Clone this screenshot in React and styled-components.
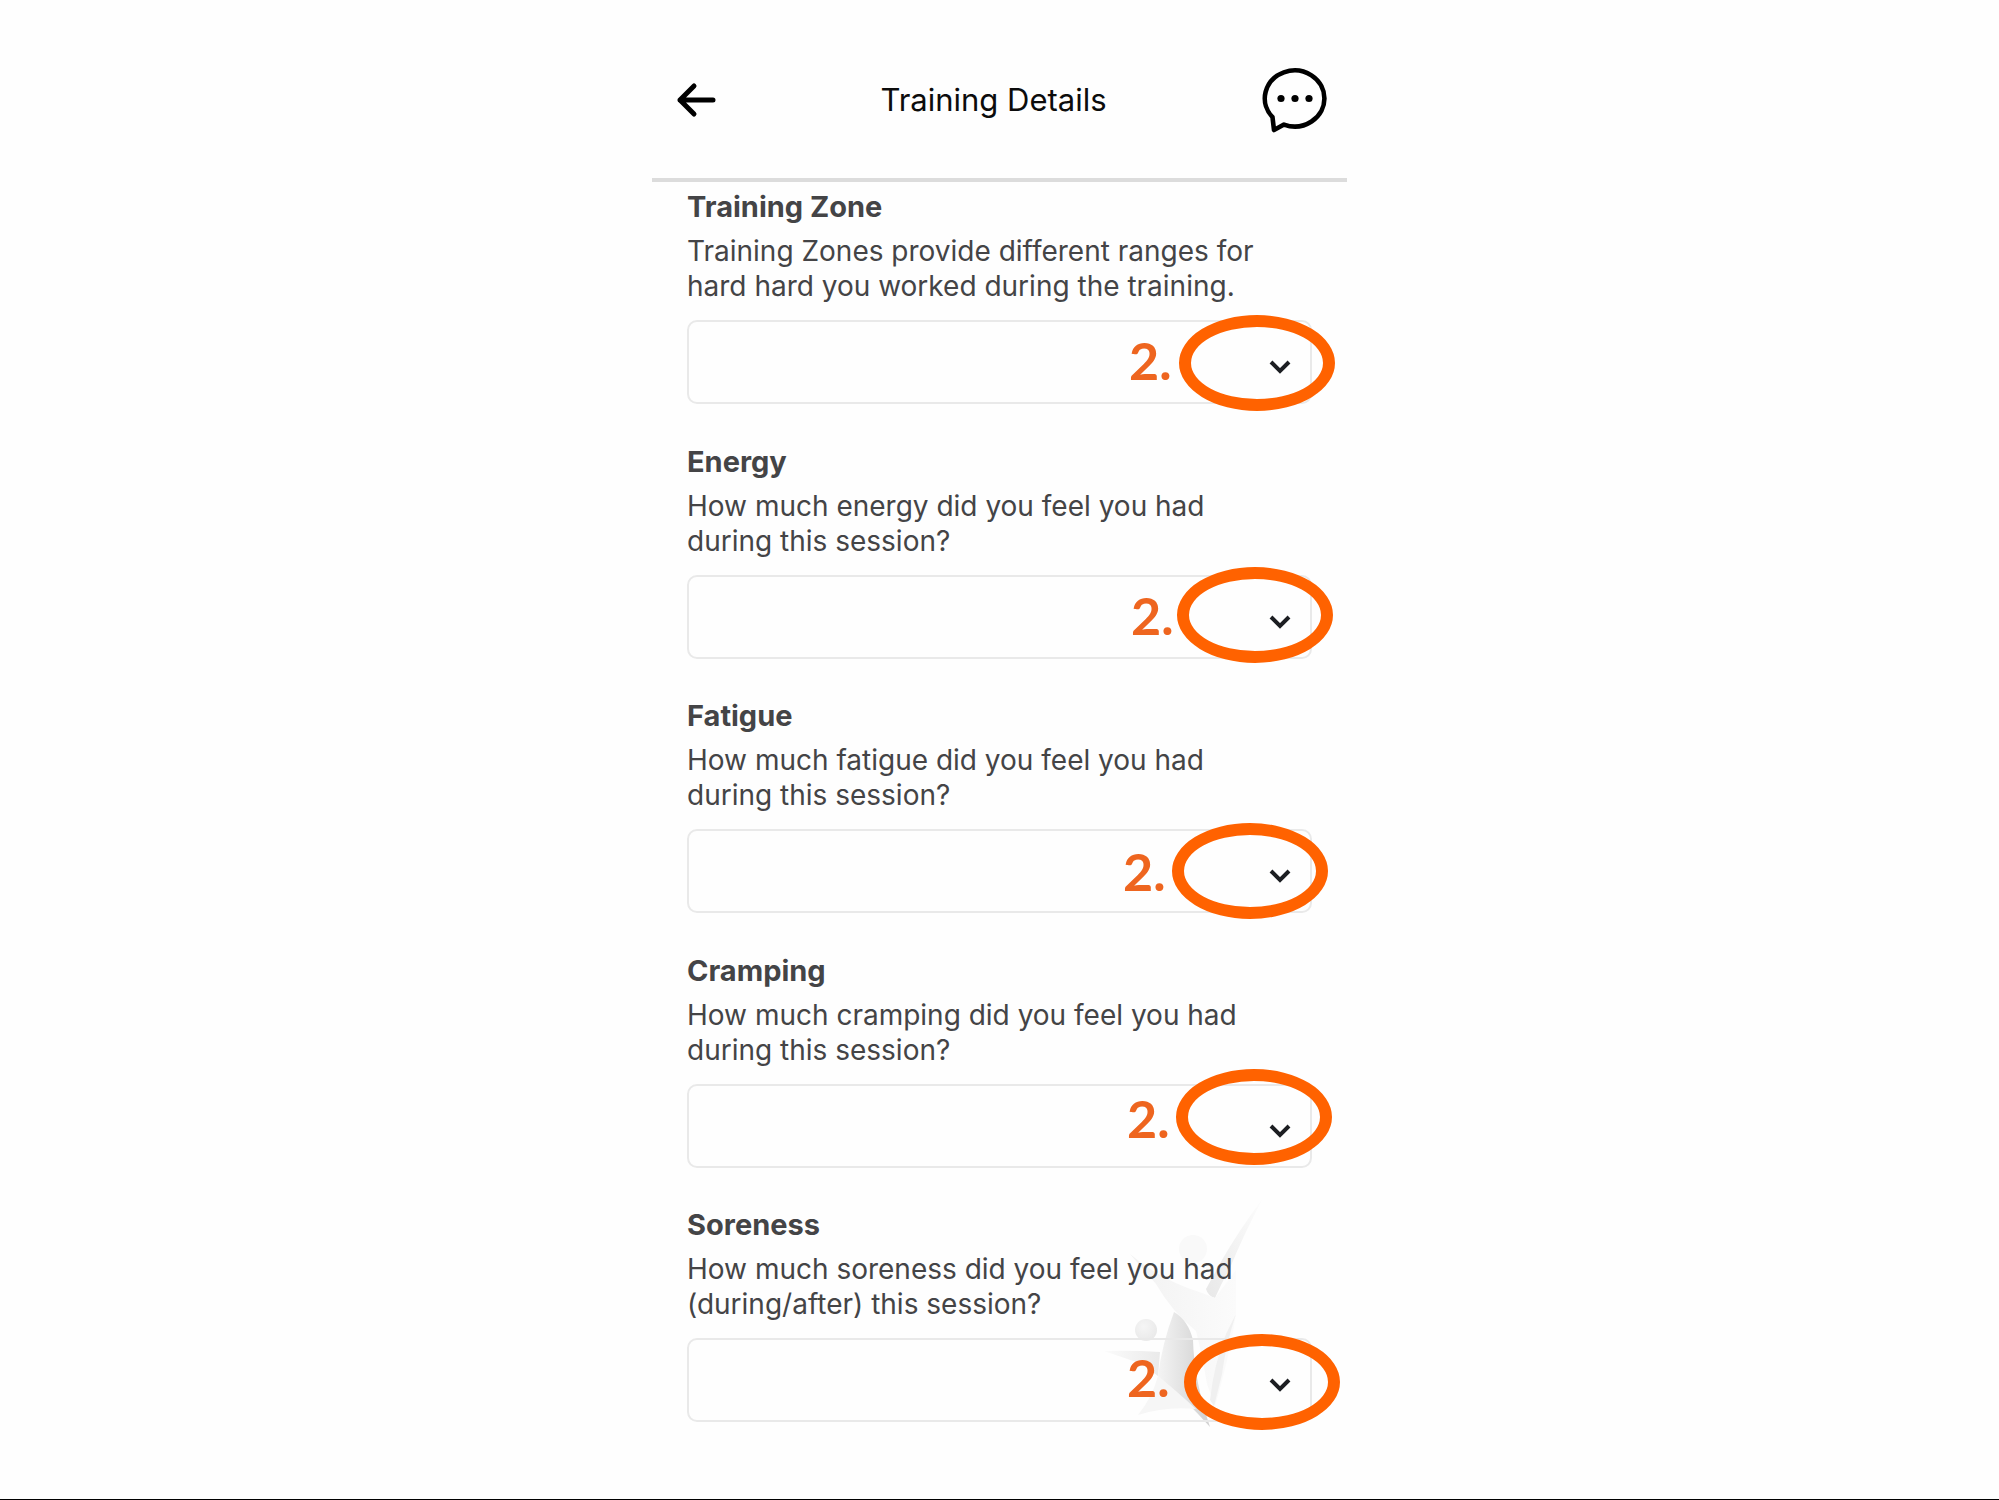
import React from "react";
import styled, { createGlobalStyle } from "styled-components";

const GlobalStyle = createGlobalStyle`
  *, *::before, *::after { box-sizing: border-box; }
  body {
    margin: 0;
    background: #fefefe;
    color: #444446;
    font-family: Inter, "Liberation Sans", sans-serif;
  }
`;

const Page = styled.div`
  display: flex;
  flex-direction: column;
  align-items: center;
  min-height: 100vh;
  border-bottom: 1px solid #000;
`;

const Screen = styled.main`
  display: flex;
  flex: 1;
  flex-direction: column;
  width: 100%;
  max-width: 695px;
`;

const Header = styled.header`
  display: grid;
  grid-template-columns: 52px 1fr 68px;
  align-items: center;
  padding: 66px 20px 44px 24px;
  border-bottom: 4px solid #dcdcdc;
`;

const IconButton = styled.button`
  display: flex;
  align-items: center;
  justify-content: ${(p) => p.$align};
  height: 68px;
  padding: 0;
  border: 0;
  background: none;
  color: #000;
  cursor: pointer;
`;

const Title = styled.h1`
  margin: 0;
  color: #0c0c0c;
  font-size: 31px;
  font-weight: 400;
  line-height: 40px;
  text-align: center;
`;

const Form = styled.form`
  display: flex;
  flex: 1;
  flex-direction: column;
  justify-content: space-between;
  padding: 7px 35px 77px;
`;

const Field = styled.div`
  position: relative;
  display: flex;
  flex-direction: column;
`;

const Label = styled.label`
  position: relative;
  margin-bottom: 9px;
  font-size: 29px;
  font-weight: 700;
  line-height: 36px;
`;

const Hint = styled.p`
  position: relative;
  margin: 0 0 16px;
  font-size: 28px;
  line-height: 35px;
  white-space: pre-line;
`;

const SelectBox = styled.div`
  position: relative;
  height: 84px;
`;

const Select = styled.select`
  width: 100%;
  height: 100%;
  padding: 0 56px 0 20px;
  appearance: none;
  border: 2px solid #e9e9e9;
  border-radius: 10px;
  background: transparent;
  color: inherit;
  font: inherit;
  font-size: 28px;
`;

const Chevron = styled.svg`
  position: absolute;
  top: 39px;
  right: 21px;
  pointer-events: none;
`;

const Step = styled.span`
  position: absolute;
  top: ${(p) => p.$y}px;
  left: ${(p) => p.$x}px;
  color: #ee651f;
  font-family: Lato, Inter, sans-serif;
  font-size: 52px;
  font-weight: 700;
  line-height: 64px;
  pointer-events: none;
`;

const Ring = styled.span`
  position: absolute;
  top: ${(p) => p.$y}px;
  left: ${(p) => p.$x}px;
  width: 156px;
  height: 96px;
  border: 12px solid #ff6200;
  border-radius: 50%;
  pointer-events: none;
`;

const Watermark = styled.svg`
  position: absolute;
  right: 40px;
  bottom: -12px;
`;

const fields = [
  {
    id: "zone",
    label: "Training Zone",
    hint: "Training Zones provide different ranges for\nhard hard you worked during the training.",
    step: [442, 8],
    ring: [492, -5],
  },
  {
    id: "energy",
    label: "Energy",
    hint: "How much energy did you feel you had\nduring this session?",
    step: [444, 8],
    ring: [490, -8],
  },
  {
    id: "fatigue",
    label: "Fatigue",
    hint: "How much fatigue did you feel you had\nduring this session?",
    step: [436, 10],
    ring: [485, -6],
  },
  {
    id: "cramping",
    label: "Cramping",
    hint: "How much cramping did you feel you had\nduring this session?",
    step: [440, 2],
    ring: [489, -15],
  },
  {
    id: "soreness",
    label: "Soreness",
    hint: "How much soreness did you feel you had\n(during/after) this session?",
    step: [440, 7],
    ring: [497, -4],
    watermark: true,
  },
];

function StarFigure() {
  return (
    <Watermark width="170" height="240" viewBox="0 0 170 240" aria-hidden="true">
      <defs>
        <linearGradient id="arm" x1="1" y1="0" x2="0" y2="1">
          <stop offset="0" stopColor="#fdfdfd" />
          <stop offset="1" stopColor="#e8e8e8" />
        </linearGradient>
        <linearGradient id="torso" x1="0" y1="0" x2="1" y2="0">
          <stop offset="0" stopColor="#f4f4f4" />
          <stop offset="0.700" stopColor="#dadada" />
          <stop offset="1" stopColor="#d0d0d0" />
        </linearGradient>
        <linearGradient id="body" x1="0" y1="0" x2="1" y2="0">
          <stop offset="0" stopColor="#f2f2f2" />
          <stop offset="1" stopColor="#fbfbfb" />
        </linearGradient>
        <linearGradient id="hand" x1="0" y1="0" x2="1" y2="0">
          <stop offset="0" stopColor="#fbfbfb" />
          <stop offset="1" stopColor="#eaeaea" />
        </linearGradient>
        <radialGradient id="head" cx="0.400" cy="0.350" r="0.700">
          <stop offset="0" stopColor="#f5f5f5" />
          <stop offset="1" stopColor="#e9e9e9" />
        </radialGradient>
      </defs>
      <circle cx="91" cy="55" r="14" fill="#f9f9f9" />
      <path d="M161 4Q136 38 120 66L104 95Q106 102 113 104Q120 88 128 74Q140 44 161 4Z" fill="url(#arm)" />
      <path d="M28 60Q58 86 100 99L113 104L134 76V120Q128 160 113 212L105 190Q100 160 94 137Q70 118 54 90Z" fill="url(#body)" />
      <path d="M134 120Q124 150 120 180L112 212L108 206Q112 170 124 140Z" fill="#f0f0f0" />
      <circle cx="44" cy="136" r="11" fill="url(#head)" />
      <path d="M72 118Q86 126 91 146Q92 186 108 233Q86 208 56 182Q60 150 72 118Z" fill="url(#torso)" />
      <path d="M2 157Q30 156 58 158L56 182L40 170Z" fill="url(#hand)" />
      <path d="M36 221Q50 204 56 182Q78 200 94 215Q64 212 36 221Z" fill="#f6f6f6" />
    </Watermark>
  );
}

export default function App() {
  return (
    <>
      <GlobalStyle />
      <Page>
        <Screen>
          <Header>
            <IconButton type="button" aria-label="Back" $align="flex-start">
              <svg width="42" height="36" viewBox="0 0 42 36" fill="none" stroke="currentColor" strokeWidth="5" strokeLinecap="round" strokeLinejoin="round">
                <path d="M37 18H4M18 4L4 18L18 32" />
              </svg>
            </IconButton>
            <Title>Training Details</Title>
            <IconButton type="button" aria-label="Messages" $align="flex-end">
              <svg width="68" height="68" viewBox="0 0 68 68" fill="none" stroke="currentColor" strokeWidth="4.600" strokeLinejoin="round">
                <path d="M13.500 51.200A29.800 28 0 1 1 25 58.600L15 64Z" />
                <g fill="currentColor" stroke="none">
                  <circle cx="22" cy="32.500" r="3.600" />
                  <circle cx="36" cy="32.500" r="3.600" />
                  <circle cx="50" cy="32.500" r="3.600" />
                </g>
              </svg>
            </IconButton>
          </Header>
          <Form>
            {fields.map((f) => (
              <Field key={f.id}>
                {f.watermark && <StarFigure />}
                <Label htmlFor={f.id}>{f.label}</Label>
                <Hint id={`${f.id}-hint`}>{f.hint}</Hint>
                <SelectBox>
                  <Select id={f.id} aria-describedby={`${f.id}-hint`} defaultValue="">
                    <option value="" />
                  </Select>
                  <Chevron width="22" height="15" viewBox="0 0 22 15" fill="none" stroke="#1c1e22" strokeWidth="4">
                    <path d="M2 3L11 12L20 3" />
                  </Chevron>
                  <Step $x={f.step[0]} $y={f.step[1]}>2.</Step>
                  <Ring $x={f.ring[0]} $y={f.ring[1]} />
                </SelectBox>
              </Field>
            ))}
          </Form>
        </Screen>
      </Page>
    </>
  );
}
